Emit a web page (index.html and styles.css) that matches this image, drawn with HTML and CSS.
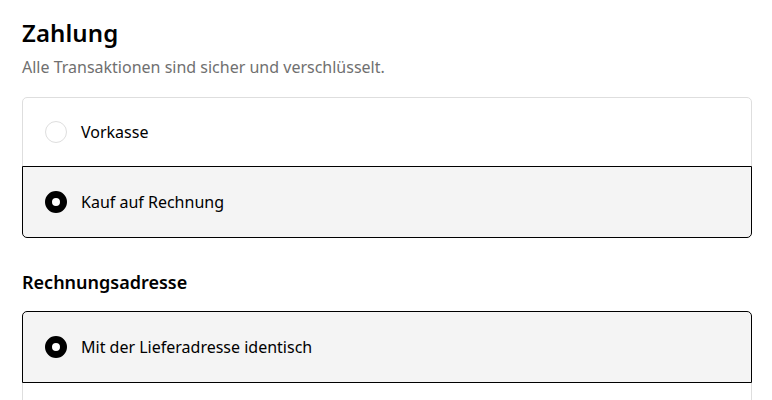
FILE: index.html
```html
<!DOCTYPE html>
<html lang="de">
<head>
<meta charset="utf-8">
<link rel="stylesheet" href="styles.css">
</head>
<body>
<main class="page">
  <section class="section">
    <h2 class="title">Zahlung</h2>
    <p class="subtitle">Alle Transaktionen sind sicher und verschlüsselt.</p>
    <div class="options">
      <label class="option">
        <span class="radio"></span>
        <span class="label">Vorkasse</span>
      </label>
      <label class="option selected">
        <span class="radio"></span>
        <span class="label">Kauf auf Rechnung</span>
      </label>
    </div>
  </section>
  <section class="section billing">
    <h3 class="subtitle-strong">Rechnungsadresse</h3>
    <div class="options">
      <label class="option selected">
        <span class="radio"></span>
        <span class="label">Mit der Lieferadresse identisch</span>
      </label>
      <label class="option">
        <span class="radio"></span>
        <span class="label">Eine andere Rechnungsadresse verwenden</span>
      </label>
    </div>
  </section>
</main>
</body>
</html>
```
FILE: styles.css
```css
* { box-sizing: border-box; }
html, body { margin: 0; background: #fff; }
body {
  font-family: "Noto Sans", "Open Sans", sans-serif;
  color: #000;
}
.page {
  padding: 17px 20px 0 22px;
  width: 772px;
}
.title {
  margin: 0;
  font-size: 24px;
  line-height: 32px;
  font-weight: 600;
  letter-spacing: 0.1px;
}
.subtitle {
  margin: 6px 0 0;
  font-size: 16px;
  line-height: 24px;
  color: #707070;
}
.options {
  margin-top: 18px;
  display: flex;
  flex-direction: column;
}
.option {
  position: relative;
  display: flex;
  align-items: center;
  gap: 14px;
  height: 70px;
  padding: 0 23px 0 22px;
  border: 1px solid #dedede;
  background: #fff;
}
.option + .option { margin-top: -1px; }
.option:first-child { border-radius: 5px 5px 0 0; }
.option:last-child { border-radius: 0 0 5px 5px; }
.option.selected {
  border-color: #000;
  background: #f4f4f4;
  z-index: 1;
  height: 72px;
}
.radio {
  width: 22px;
  height: 22px;
  border-radius: 50%;
  border: 1px solid #dedede;
  background: #fff;
  flex: none;
}
.selected .radio {
  border: 7px solid #000;
}
.label {
  font-size: 16px;
  line-height: 24px;
}
.billing { margin-top: 32px; }
.subtitle-strong {
  margin: 0;
  font-size: 18px;
  line-height: 24px;
  font-weight: 600;
}
.billing .options { margin-top: 17px; }
```
